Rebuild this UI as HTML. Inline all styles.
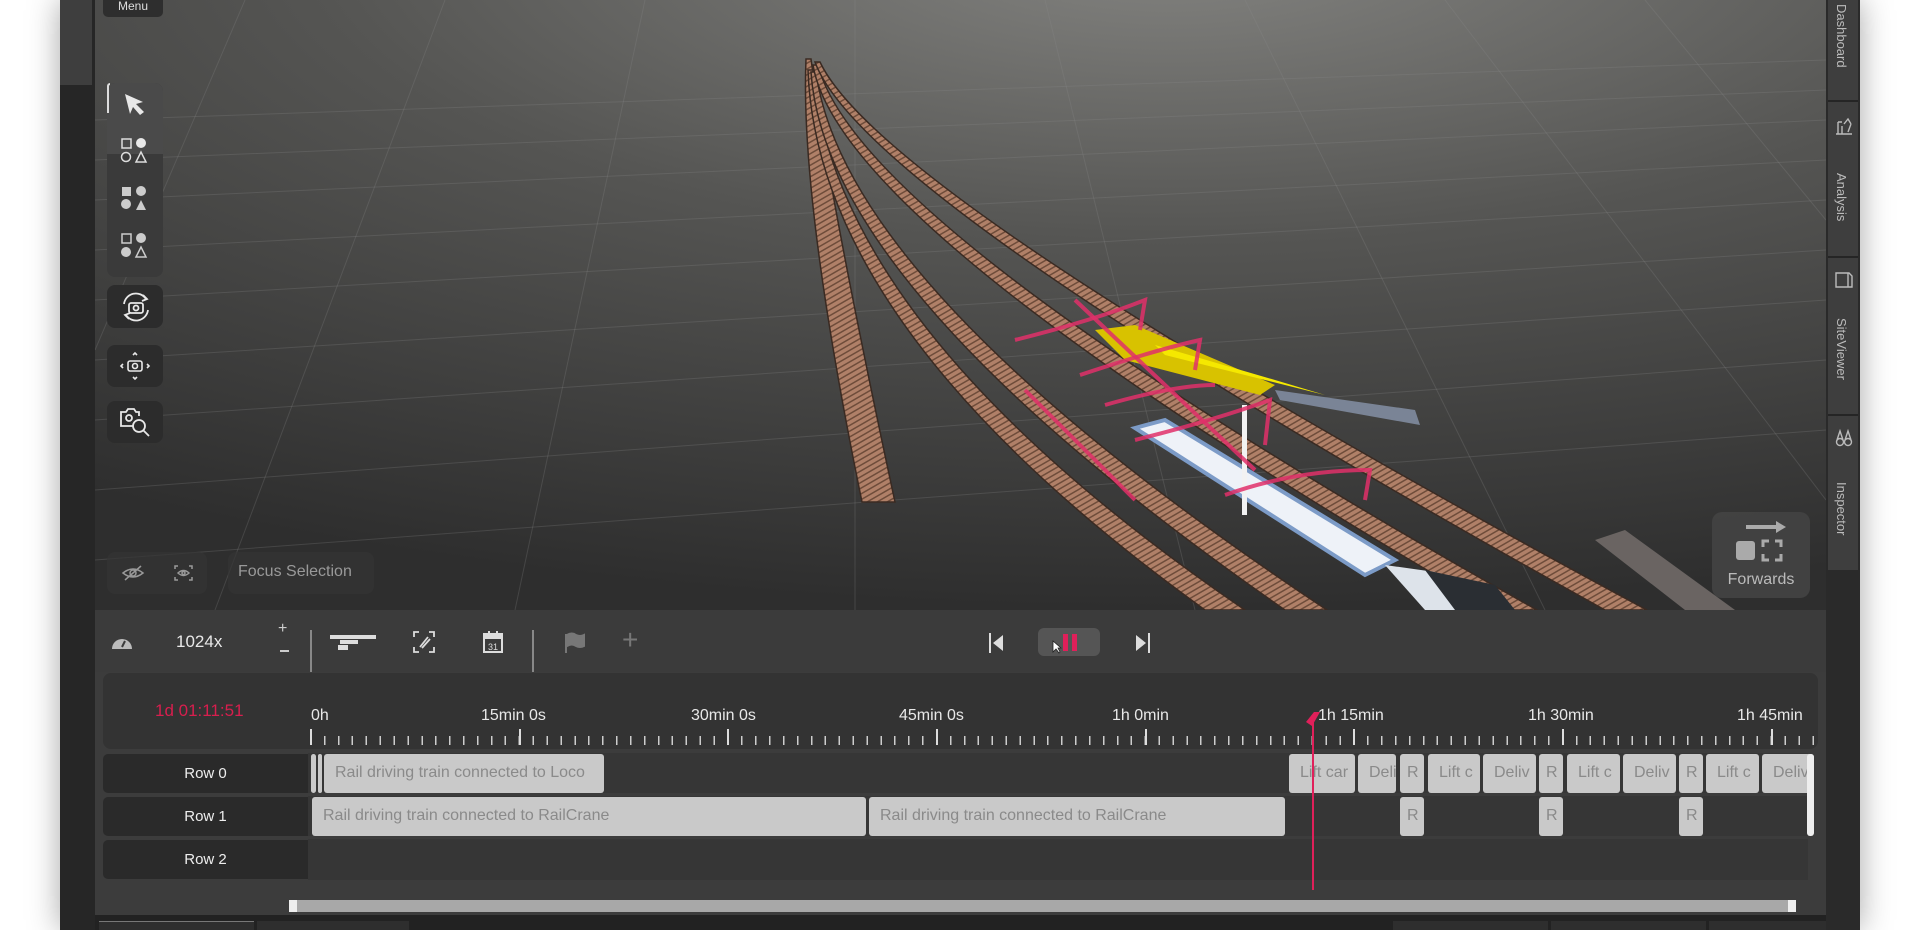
<!DOCTYPE html>
<html><head><meta charset="utf-8">
<style>
*{margin:0;padding:0;box-sizing:border-box}
body{width:1920px;height:930px;overflow:hidden;background:#fff;font-family:"Liberation Sans",sans-serif;position:relative}
.a{position:absolute}
.frame{left:60px;top:0;width:1800px;height:930px;background:#262626;box-shadow:0 0 30px rgba(0,0,0,.35)}
.blk{position:absolute;background:#c9c9c9;border-radius:3px;color:#8a8a8a;font-size:16px;line-height:38px;padding-left:11px;white-space:nowrap;overflow:hidden}
.row{position:absolute;left:103px;width:205px;height:39px;background:#2a2a2a;border-radius:5px 0 0 5px;color:#eee;font-size:15px;text-align:center;line-height:39px}
.tl{position:absolute;top:707px;color:#e8e8e8;font-size:16px}
.mj{position:absolute;top:729px;width:2px;height:16px;background:#ddd}
.tool{position:absolute;left:107px;width:56px;background:#353535;border-radius:8px}
.side{position:absolute;left:1834px;color:#bbb;font-size:13px;writing-mode:vertical-rl}
</style></head><body>
<div class="a frame"></div>
<div class="a" style="left:60px;top:0;width:32px;height:85px;background:#3e3e3e"></div>
<svg class="a" style="left:95px;top:0" width="1731" height="610" viewBox="0 0 1731 610">
<defs>
<radialGradient id="bg" cx="0.62" cy="-0.1" r="1.1">
<stop offset="0" stop-color="#858582"/><stop offset="0.45" stop-color="#555553"/><stop offset="1" stop-color="#2e2e2e"/>
</radialGradient>
<pattern id="ties" width="5" height="5" patternUnits="userSpaceOnUse" patternTransform="rotate(-30)">
<rect width="5" height="5" fill="#b08068"/><rect width="5" height="1.5" fill="#6e4c3a"/>
</pattern>
</defs>
<rect width="1731" height="610" fill="url(#bg)"/>
<g stroke="#8a8a8a" stroke-opacity=".25" stroke-width="1" fill="none">
<path d="M0,120 L1731,60"/><path d="M0,200 L1731,120"/><path d="M0,300 L1731,200"/><path d="M0,420 L1731,300"/><path d="M0,560 L1731,430"/><path d="M0,160 L1731,90"/><path d="M0,250 L1731,160"/><path d="M0,360 L1731,250"/><path d="M0,490 L1731,360"/>
<path d="M150,0 L0,350"/><path d="M350,0 L120,610"/><path d="M550,0 L420,610"/><path d="M760,0 L760,610"/><path d="M950,0 L1100,610"/><path d="M1150,0 L1450,610"/><path d="M1350,0 L1731,500"/><path d="M1550,0 L1731,220"/>
</g>
<g fill="url(#ties)" stroke="#3a2a22" stroke-width="1.5">
<path d="M711,59 Q705,200 767,502 L800,502 Q735,200 716,59 Z"/>
<path d="M713,70 Q722,330 1110,610 L1150,610 Q740,330 718,70 Z"/>
<path d="M716,72 Q730,290 1190,610 L1232,610 Q750,290 721,72 Z"/>
<path d="M718,65 Q745,230 1400,610 L1442,610 Q765,230 723,65 Z"/>
<path d="M720,62 Q770,200 1510,610 L1552,610 Q790,200 725,62 Z"/>
</g>
<polygon points="1500,540 1530,530 1640,610 1590,610" fill="#6a6462"/>
<polygon points="1040,428 1070,420 1300,560 1270,575" fill="#eef2f8" stroke="#7c9bc7" stroke-width="4"/>
<polygon points="1290,565 1340,572 1411,610 1330,610" fill="#dde3ea"/>
<polygon points="1330,570 1400,585 1420,610 1360,610" fill="#2a2e33"/>
<polygon points="1000,330 1040,325 1180,385 1165,395 1030,360" fill="#d8c200"/>
<polygon points="1060,345 1180,380 1230,395 1070,355" fill="#f5e800"/>
<polygon points="1180,390 1320,410 1325,425 1185,400" fill="#7a8496"/>
<rect x="1147" y="405" width="5" height="110" fill="#f2f2f2"/>
<g stroke="#e0306a" stroke-width="4" fill="none" stroke-opacity=".85">
<path d="M920,340 Q1000,320 1050,300 L1045,330"/>
<path d="M985,375 Q1060,350 1105,340 L1100,370"/>
<path d="M1010,405 Q1080,385 1120,385"/>
<path d="M1040,440 Q1120,420 1175,400 L1170,445"/>
<path d="M1130,495 Q1200,470 1275,470 L1270,500"/>
<path d="M980,300 L1160,470"/>
<path d="M930,390 L1040,500"/>
</g>
</svg>
<div class="a" style="left:103px;top:0;width:60px;height:17px;background:#2e2e2e;border-radius:0 0 5px 5px;color:#ddd;font-size:12px;text-align:center;line-height:13px">Menu</div>
<div class="tool" style="top:83px;height:194px;background:#3a3a3a"></div>
<div class="a" style="left:107px;top:83px;width:56px;height:71px;background:#4a4a4a;border-radius:8px 8px 0 0"></div>
<div class="a" style="left:107px;top:83px;width:3px;height:30px;border-left:2px solid #ddd;border-top:2px solid #ddd;border-radius:8px 0 0 0"></div>
<svg class="a" style="left:119px;top:90px" width="34" height="185" viewBox="0 0 34 185" fill="#e8e8e8">
<path d="M6,4 L24,12 L17,14 L25,22 L21,25 L14,17 L11,24 Z"/>
<rect x="3" y="49" width="9" height="9" fill="none" stroke="#ddd" stroke-width="1.5"/><circle cx="22" cy="53" r="5"/>
<circle cx="7" cy="67" r="4.5" fill="none" stroke="#ddd" stroke-width="1.5"/><path d="M17,72 L22,62 L27,72 Z" fill="none" stroke="#ddd" stroke-width="1.5"/>
<rect x="3" y="97" width="9" height="9" fill="#ccc"/><circle cx="22" cy="101" r="5" fill="#ccc"/>
<circle cx="7" cy="114" r="5" fill="#ccc"/><path d="M17,120 L22,110 L27,120 Z" fill="#ccc"/>
<rect x="3" y="144" width="9" height="9" fill="none" stroke="#ccc" stroke-width="1.5"/><circle cx="22" cy="148" r="5" fill="#ccc"/>
<circle cx="7" cy="162" r="5" fill="#ccc"/><path d="M17,167 L22,157 L27,167 Z" fill="none" stroke="#ccc" stroke-width="1.5"/>
</svg>
<div class="tool" style="top:285px;height:43px;background:#2c2c2c"></div>
<svg class="a" style="left:119px;top:290px" width="34" height="34" viewBox="0 0 34 34" fill="none" stroke="#e8e8e8" stroke-width="1.8">
<path d="M5,14 A12,12 0 0 1 27,9"/><path d="M24,5 L28,9 L23,11"/><path d="M29,20 A12,12 0 0 1 7,25"/><path d="M10,29 L6,25 L11,23"/>
<rect x="10" y="13" width="14" height="10" rx="2"/><circle cx="17" cy="18" r="2.5"/>
</svg>
<div class="tool" style="top:345px;height:42px;background:#2c2c2c"></div>
<svg class="a" style="left:118px;top:349px" width="34" height="34" viewBox="0 0 34 34" fill="none" stroke="#e8e8e8" stroke-width="1.6">
<rect x="10" y="12" width="14" height="10" rx="2"/><circle cx="17" cy="17" r="2.5"/>
<path d="M15,6 L17,4 L19,6"/><path d="M15,28 L17,30 L19,28"/><path d="M5,15 L3,17 L5,19"/><path d="M29,15 L31,17 L29,19"/>
</svg>
<div class="tool" style="top:401px;height:42px;background:#2c2c2c"></div>
<svg class="a" style="left:117px;top:404px" width="36" height="36" viewBox="0 0 36 36" fill="none" stroke="#e8e8e8" stroke-width="1.8">
<path d="M16,22 L4,22 L4,8 L9,8 L11,5 L17,5 L19,8 L22,8 L22,12"/><circle cx="12" cy="14" r="3"/><circle cx="22" cy="22" r="6"/><path d="M26,26 L32,32"/>
</svg>
<div class="a" style="left:107px;top:552px;width:100px;height:42px;background:#353535;border-radius:8px;opacity:.7"></div>
<svg class="a" style="left:120px;top:563px" width="90" height="20" viewBox="0 0 90 20" fill="none" stroke="#999" stroke-width="1.5">
<path d="M3,10 Q13,2 23,10 Q13,18 3,10 Z"/><circle cx="13" cy="10" r="3"/><path d="M5,17 L21,3"/>
<path d="M55,6 L55,3 L58,3 M69,3 L72,3 L72,6 M72,14 L72,17 L69,17 M58,17 L55,17 L55,14"/><path d="M58,10 Q63.5,5 69,10 Q63.5,15 58,10 Z"/><circle cx="63.5" cy="10" r="1.5"/>
</svg>
<div class="a" style="left:228px;top:552px;width:146px;height:42px;background:#353535;border-radius:8px;opacity:.7"></div>
<div class="a" style="left:238px;top:563px;color:#999;font-size:16px">Focus Selection</div>
<div class="a" style="left:1712px;top:512px;width:98px;height:86px;background:#444;border-radius:10px;opacity:.85"></div>
<svg class="a" style="left:1730px;top:517px" width="64" height="50" viewBox="0 0 64 50">
<path d="M16,10 L50,10" stroke="#aaa" stroke-width="4"/><path d="M46,4 L56,10 L46,16 Z" fill="#aaa"/>
<rect x="6" y="24" width="19" height="19" rx="3" fill="#aaa"/>
<path d="M33,30 L33,24 L39,24 M45,24 L51,24 L51,30 M51,37 L51,43 L45,43 M39,43 L33,43 L33,37" stroke="#aaa" stroke-width="3" fill="none"/>
</svg>
<div class="a" style="left:1712px;top:571px;width:98px;text-align:center;color:#bbb;font-size:16px">Forwards</div>
<div class="a" style="left:1826px;top:0;width:34px;height:930px;background:#2a2a2a"></div>
<div class="a" style="left:1828px;top:0;width:30px;height:570px;background:#3e3e3e"></div>
<div class="a" style="left:1828px;top:100px;width:30px;height:2px;background:#252525"></div>
<div class="a" style="left:1828px;top:256px;width:30px;height:2px;background:#252525"></div>
<div class="a" style="left:1828px;top:414px;width:30px;height:2px;background:#252525"></div>
<div class="side" style="top:4px">Dashboard</div>
<div class="side" style="top:173px">Analysis</div>
<div class="side" style="top:318px">SiteViewer</div>
<div class="side" style="top:482px">Inspector</div>
<svg class="a" style="left:1834px;top:116px" width="20" height="20" viewBox="0 0 20 20" fill="none" stroke="#bbb" stroke-width="1.4"><path d="M2,18 L18,18 M4,18 L4,6 M8,18 L8,10 M4,6 L8,6 M10,8 L14,3 L17,8 M14,16 L17,8"/></svg>
<svg class="a" style="left:1834px;top:270px" width="20" height="20" viewBox="0 0 20 20" fill="none" stroke="#bbb" stroke-width="1.4"><path d="M2,3 L15,3 L18,6 L18,17 L2,17 Z M14,3 L14,17"/></svg>
<svg class="a" style="left:1834px;top:428px" width="20" height="20" viewBox="0 0 20 20" fill="none" stroke="#bbb" stroke-width="1.4"><circle cx="6" cy="14" r="3.5"/><circle cx="14" cy="14" r="3.5"/><path d="M3,12 L6,3 L9,12 M11,12 L14,3 L17,12"/></svg>
<div class="a" style="left:95px;top:610px;width:1731px;height:62px;background:#3b3b3b"></div>
<svg class="a" style="left:110px;top:632px" width="24" height="20" viewBox="0 0 24 20"><path d="M2,17 A10,10 0 1 1 22,17 Z" fill="#bbb"/><path d="M12,15 L15,9" stroke="#3b3b3b" stroke-width="2"/></svg>
<div class="a" style="left:176px;top:632px;color:#e8e8e8;font-size:17px">1024x</div>
<div class="a" style="left:278px;top:620px;color:#ccc;font-size:16px">+</div>
<div class="a" style="left:280px;top:650px;width:9px;height:1.5px;background:#ccc"></div>
<div class="a" style="left:310px;top:630px;width:2px;height:50px;background:#888"></div>
<svg class="a" style="left:330px;top:632px" width="46" height="20" viewBox="0 0 46 20" fill="#ddd"><rect x="0" y="3" width="46" height="4"/><rect x="10" y="8" width="18" height="4"/><rect x="8" y="13" width="10" height="5"/></svg>
<svg class="a" style="left:412px;top:630px" width="24" height="24" viewBox="0 0 24 24" fill="none" stroke="#ddd" stroke-width="1.8"><path d="M2,7 L2,2 L7,2 M17,2 L22,2 L22,7 M22,17 L22,22 L17,22 M7,22 L2,22 L2,17"/><path d="M8,17 L16,7 M10,18 L18,9"/></svg>
<svg class="a" style="left:482px;top:630px" width="22" height="24" viewBox="0 0 22 24"><rect x="2" y="4" width="18" height="18" fill="none" stroke="#ddd" stroke-width="2"/><rect x="2" y="4" width="18" height="5" fill="#ddd"/><rect x="6" y="1" width="2" height="5" fill="#ddd"/><rect x="14" y="1" width="2" height="5" fill="#ddd"/><text x="11" y="20" text-anchor="middle" font-size="9" fill="#ddd" font-family="Liberation Sans">31</text></svg>
<div class="a" style="left:532px;top:630px;width:2px;height:50px;background:#888"></div>
<svg class="a" style="left:564px;top:632px" width="22" height="22" viewBox="0 0 22 22"><path d="M2,2 L2,21 M3,3 Q8,0 12,3 Q16,5 20,3 L20,14 Q16,16 12,14 Q8,11 3,14 Z" fill="#777" stroke="#777" stroke-width="2"/></svg>
<div class="a" style="left:622px;top:625px;color:#777;font-size:28px;line-height:30px">+</div>
<svg class="a" style="left:988px;top:633px" width="18" height="20" viewBox="0 0 18 20" fill="#ddd"><rect x="1" y="0" width="2" height="20"/><path d="M15,2 L5,10 L15,18 Z"/></svg>
<div class="a" style="left:1038px;top:628px;width:62px;height:28px;background:#555;border-radius:6px"></div>
<div class="a" style="left:1063px;top:634px;width:5px;height:17px;background:#e0205a"></div>
<div class="a" style="left:1072px;top:634px;width:5px;height:17px;background:#e0205a"></div>
<svg class="a" style="left:1052px;top:640px" width="10" height="14" viewBox="0 0 10 14"><path d="M1,1 L1,12 L4,9 L7,13 L8,12 L6,8 L9,8 Z" fill="#fff" stroke="#222" stroke-width=".8"/></svg>
<svg class="a" style="left:1133px;top:633px" width="18" height="20" viewBox="0 0 18 20" fill="#ddd"><rect x="15" y="0" width="2" height="20"/><path d="M3,2 L13,10 L3,18 Z"/></svg>
<div class="a" style="left:95px;top:672px;width:1731px;height:243px;background:#3c3c3c"></div>
<div class="a" style="left:103px;top:673px;width:1715px;height:76px;background:#333;border-radius:8px"></div>
<div class="a" style="left:155px;top:701px;color:#d81e4e;font-size:17px">1d 01:11:51</div>
<div class="tl" style="left:311px">0h</div>
<div class="tl" style="left:481px">15min 0s</div>
<div class="tl" style="left:691px">30min 0s</div>
<div class="tl" style="left:899px">45min 0s</div>
<div class="tl" style="left:1112px">1h 0min</div>
<div class="tl" style="left:1318px">1h 15min</div>
<div class="tl" style="left:1528px">1h 30min</div>
<div class="tl" style="left:1737px">1h 45min</div>
<div class="a" style="left:310px;top:736px;width:1508px;height:9px;background:repeating-linear-gradient(90deg,#ccc 0 1.5px,transparent 1.5px 13.91px)"></div>
<div class="mj" style="left:310px"></div><div class="mj" style="left:519px"></div><div class="mj" style="left:727px"></div><div class="mj" style="left:936px"></div><div class="mj" style="left:1145px"></div><div class="mj" style="left:1353px"></div><div class="mj" style="left:1562px"></div><div class="mj" style="left:1771px"></div>
<div class="a" style="left:308px;top:753px;width:1500px;height:127px;background:#363636"></div>
<div class="a" style="left:308px;top:793px;width:1500px;height:3px;background:#3c3c3c"></div>
<div class="a" style="left:308px;top:836px;width:1500px;height:3px;background:#3c3c3c"></div>
<div class="row" style="top:754px">Row 0</div>
<div class="row" style="top:797px">Row 1</div>
<div class="row" style="top:840px">Row 2</div>
<div class="blk" style="left:311px;top:754px;width:5px;height:39px;padding:0"></div>
<div class="blk" style="left:318px;top:754px;width:4px;height:39px;padding:0"></div>
<div class="blk" style="left:324px;top:754px;width:280px;height:39px">Rail driving train connected to Loco</div>
<div class="blk" style="left:1289px;top:754px;width:66px;height:39px">Lift car</div>
<div class="blk" style="left:1358px;top:754px;width:38px;height:39px">Deliv</div>
<div class="blk" style="left:1400px;top:754px;width:24px;height:39px;padding-left:7px">R</div>
<div class="blk" style="left:1428px;top:754px;width:52px;height:39px">Lift c</div>
<div class="blk" style="left:1483px;top:754px;width:53px;height:39px">Deliv</div>
<div class="blk" style="left:1539px;top:754px;width:24px;height:39px;padding-left:7px">R</div>
<div class="blk" style="left:1567px;top:754px;width:53px;height:39px">Lift c</div>
<div class="blk" style="left:1623px;top:754px;width:53px;height:39px">Deliv</div>
<div class="blk" style="left:1679px;top:754px;width:24px;height:39px;padding-left:7px">R</div>
<div class="blk" style="left:1706px;top:754px;width:53px;height:39px">Lift c</div>
<div class="blk" style="left:1762px;top:754px;width:52px;height:39px">Deliv</div>
<div class="blk" style="left:312px;top:797px;width:554px;height:39px">Rail driving train connected to RailCrane</div>
<div class="blk" style="left:869px;top:797px;width:416px;height:39px">Rail driving train connected to RailCrane</div>
<div class="blk" style="left:1400px;top:797px;width:24px;height:39px;padding-left:7px">R</div>
<div class="blk" style="left:1539px;top:797px;width:24px;height:39px;padding-left:7px">R</div>
<div class="blk" style="left:1679px;top:797px;width:24px;height:39px;padding-left:7px">R</div>
<div class="a" style="left:1807px;top:754px;width:7px;height:82px;background:#eee;border-radius:3px"></div>
<div class="a" style="left:1312px;top:718px;width:2px;height:172px;background:#e0205a"></div>
<svg class="a" style="left:1304px;top:710px" width="20" height="20" viewBox="0 0 20 20"><path d="M2,12 L10,2 L16,2 L8,16 Z" fill="#e0205a"/></svg>
<div class="a" style="left:289px;top:900px;width:1507px;height:12px;background:#a8a8a8;border-radius:2px"></div>
<div class="a" style="left:289px;top:900px;width:8px;height:12px;background:#eee"></div>
<div class="a" style="left:1788px;top:900px;width:8px;height:12px;background:#eee"></div>
<div class="a" style="left:95px;top:915px;width:1731px;height:15px;background:#222"></div>
<div class="a" style="left:99px;top:921px;width:155px;height:9px;background:#2e2e2e;border-top:1px solid #777"></div>
<div class="a" style="left:257px;top:921px;width:152px;height:9px;background:#2e2e2e"></div>
<div class="a" style="left:1393px;top:921px;width:155px;height:9px;background:#2e2e2e"></div>
<div class="a" style="left:1551px;top:921px;width:155px;height:9px;background:#2e2e2e"></div>
<div class="a" style="left:1709px;top:921px;width:117px;height:9px;background:#2e2e2e"></div>
</body></html>
